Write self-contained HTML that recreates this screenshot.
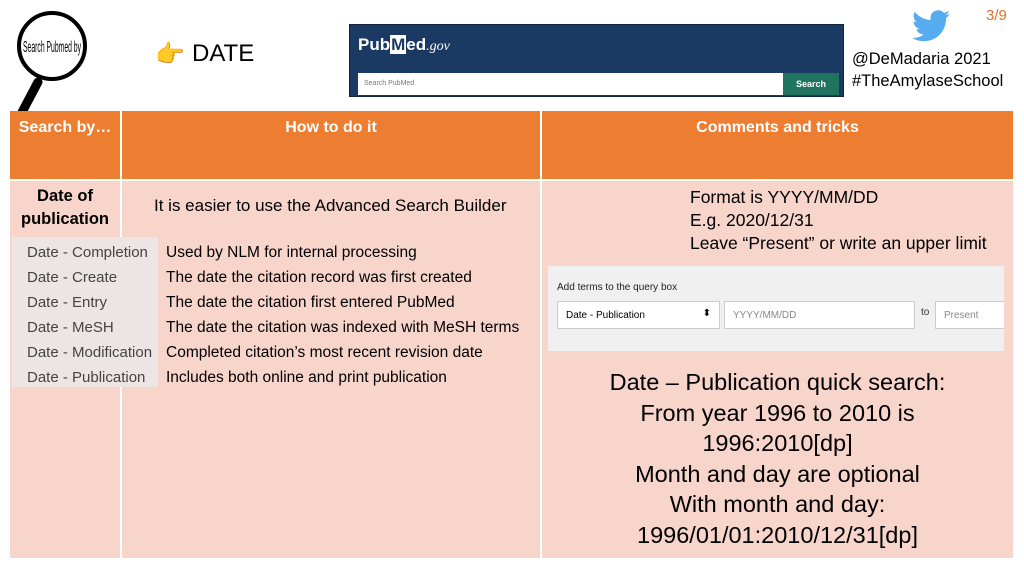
<!DOCTYPE html>
<html><head><meta charset="utf-8"><style>
*{margin:0;padding:0;box-sizing:border-box}
body{width:1024px;height:575px;background:#fff;position:relative;overflow:hidden;font-family:"Liberation Sans",sans-serif;color:#000}
.a{position:absolute;white-space:nowrap}
.hd{background:#ed7d31;color:#fff;font-weight:bold;font-size:16px;text-align:center;padding-top:8px}
.bd{background:#f8d5cb}
.l{font-size:15.5px}
.g{font-size:15px;color:#444}
.big{font-size:23.5px;text-align:center;line-height:30.5px}
</style></head><body>
<svg class="a" style="left:8px;top:6px" width="90" height="115">
<line x1="30" y1="76" x2="12" y2="110" stroke="#000" stroke-width="9" stroke-linecap="round"/>
<circle cx="44" cy="40" r="33" fill="#fff" stroke="#000" stroke-width="4"/>
<text x="44" y="46" font-size="16" font-family="Liberation Sans Narrow,Liberation Sans,sans-serif" text-anchor="middle" textLength="58" lengthAdjust="spacingAndGlyphs">Search Pubmed by</text>
</svg>
<div class="a" style="left:155px;top:40px;font-size:24px;color:#f3c9a8">👉</div>
<div class="a" style="left:192px;top:40px;font-size:24px">DATE</div>
<div class="a" style="left:349px;top:24px;width:495px;height:73px;background:#1b3a63;border:1px solid #0f2540">
<div class="a" style="left:8px;top:10px;color:#fff;font-size:17px;font-weight:bold">Pub<span style="background:#fff;color:#1b3a63;padding:0 1px">M</span>ed<span style="font-family:'Liberation Serif',serif;font-style:italic;font-weight:normal;font-size:14px">.gov</span></div>
<div class="a" style="left:8px;top:48px;width:425px;height:22px;background:#fff"></div>
<div class="a" style="left:14px;top:55px;font-size:7px;color:#777">Search PubMed</div>
<div class="a" style="left:433px;top:48px;width:56px;height:22px;background:#20735e;color:#fff;font-size:9px;font-weight:bold;text-align:center;line-height:22px">Search</div>
</div>
<svg class="a" style="left:912px;top:10px" width="38" height="32" viewBox="0 0 24 20"><path fill="#55acee" d="M24 2.4a10 10 0 0 1-2.8.8A5 5 0 0 0 23.3.5a10 10 0 0 1-3.1 1.2A4.9 4.9 0 0 0 11.8 6.2 14 14 0 0 1 1.7 1 4.9 4.9 0 0 0 3.2 7.6a4.9 4.9 0 0 1-2.2-.6 4.9 4.9 0 0 0 3.9 4.9 5 5 0 0 1-2.2.1 4.9 4.9 0 0 0 4.6 3.4A9.9 9.9 0 0 1 0 17.4 14 14 0 0 0 7.5 19.6c9.1 0 14-7.5 14-14v-.6A10 10 0 0 0 24 2.4z"/></svg>
<div class="a" style="left:986px;top:7px;color:#e0712b;font-size:15px">3/9</div>
<div class="a" style="left:852px;top:50px;font-size:16.5px">@DeMadaria 2021</div>
<div class="a" style="left:852px;top:72px;font-size:16.5px">#TheAmylaseSchool</div>
<div class="a hd" style="left:10px;top:111px;width:110px;height:68px">Search by…</div>
<div class="a hd" style="left:122px;top:111px;width:418px;height:68px">How to do it</div>
<div class="a hd" style="left:542px;top:111px;width:471px;height:68px">Comments and tricks</div>
<div class="a bd" style="left:10px;top:181px;width:110px;height:377px"></div>
<div class="a bd" style="left:122px;top:181px;width:418px;height:377px"></div>
<div class="a bd" style="left:542px;top:181px;width:471px;height:377px"></div>
<div class="a" style="left:10px;top:185px;width:110px;text-align:center;font-weight:bold;font-size:16.5px;line-height:23px">Date of<br>publication</div>
<div class="a" style="left:154px;top:196px;font-size:17px">It is easier to use the Advanced Search Builder</div>
<div class="a" style="left:12px;top:237px;width:146px;height:150px;background:#ede4e4"></div>
<div class="a g" style="left:27px;top:240px;line-height:25px">Date - Completion<br>Date - Create<br>Date - Entry<br>Date - MeSH<br>Date - Modification<br>Date - Publication</div>
<div class="a l" style="left:166px;top:240px;line-height:25px">Used by NLM for internal processing<br>The date the citation record was first created<br>The date the citation first entered PubMed<br>The date the citation was indexed with MeSH terms<br>Completed citation’s most recent revision date<br>Includes both online and print publication</div>
<div class="a" style="left:690px;top:186px;font-size:17.5px;line-height:23px">Format is YYYY/MM/DD<br>E.g. 2020/12/31<br>Leave “Present” or write an upper limit</div>
<div class="a" style="left:548px;top:266px;width:456px;height:85px;background:#f0f0f0"></div>
<div class="a" style="left:557px;top:282px;font-size:10px;color:#222">Add terms to the query box</div>
<div class="a" style="left:557px;top:301px;width:163px;height:28px;background:#fff;border:1px solid #ccc;font-size:10px;padding:8px 0 0 8px">Date - Publication<span style="position:absolute;right:8px;top:6px;font-size:10px">⬍</span></div>
<div class="a" style="left:724px;top:301px;width:191px;height:28px;background:#fff;border:1px solid #ccc;font-size:10px;color:#888;padding:8px 0 0 8px">YYYY/MM/DD</div>
<div class="a" style="left:921px;top:307px;font-size:10px;color:#333">to</div>
<div class="a" style="left:935px;top:301px;width:69px;height:28px;background:#fff;border:1px solid #ccc;border-right:none;font-size:10px;color:#888;padding:8px 0 0 8px">Present</div>
<div class="a big" style="left:542px;top:367px;width:471px">Date – Publication quick search:<br>From year 1996 to 2010 is<br>1996:2010[dp]<br>Month and day are optional<br>With month and day:<br>1996/01/01:2010/12/31[dp]</div>
</body></html>
